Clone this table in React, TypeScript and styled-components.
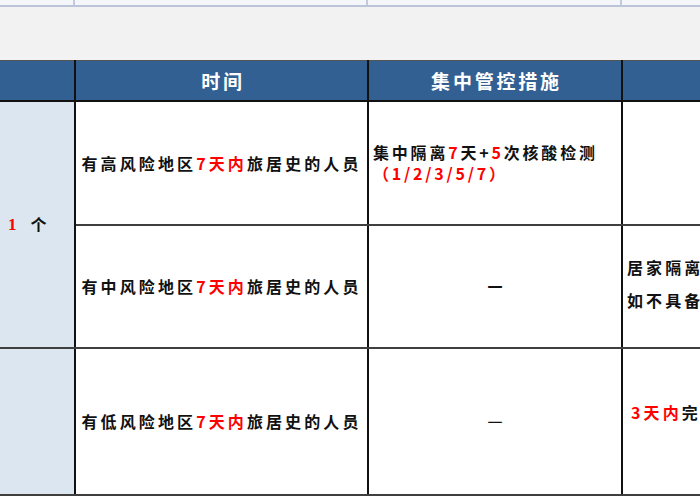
import styled, { createGlobalStyle } from 'styled-components'

const GlobalStyle = createGlobalStyle`
  html, body {
    margin: 0;
    padding: 0;
    background: #ffffff;
    overflow: hidden;
  }
  body {
    font-family: "Noto Sans CJK SC", "Noto Sans", sans-serif;
  }
`

const Sheet = styled.div`
  width: 940px;
`

const TopStrip = styled.div`
  display: grid;
  grid-template-columns: 75px 293px 254px 1fr;
  height: 5px;
  background: #f5f6f9;
  border-bottom: 2px solid #bcc4da;
`

const StripCell = styled.div`
  border-right: 2px solid #c3cadd;
`

const Band = styled.div`
  height: 53px;
  background: #f2f2f2;
`

const Table = styled.table`
  border-collapse: collapse;
  table-layout: fixed;
  width: 920px;
  border-top: 1px solid #555555;
`

const HeadCell = styled.th`
  height: 39px;
  padding: 0 0 0 3px;
  background: #336092;
  color: #ffffff;
  font-size: 19px;
  font-weight: 700;
  letter-spacing: 2.8px;
  text-align: center;
  border-left: 2px solid #111111;
  border-right: 2px solid #111111;
  border-bottom: 2px solid #111111;

  &:first-child {
    border-left: none;
  }
`

const Row = styled.tr<{ $h: number }>`
  height: ${(p) => p.$h}px;
`

const Cell = styled.td<{ $align?: 'left' | 'center'; $side?: boolean }>`
  padding: 0 4px;
  background: ${(p) => (p.$side ? '#dce6f1' : '#ffffff')};
  color: #111111;
  font-size: 16px;
  font-weight: 700;
  letter-spacing: 3.1px;
  line-height: 21px;
  text-align: ${(p) => p.$align ?? 'center'};
  vertical-align: middle;
  border-top: 2px solid #3f3f3f;
  border-bottom: 2px solid #3f3f3f;
  border-left: 2px solid #111111;
  border-right: 2px solid #111111;
  overflow: hidden;

  &:first-child {
    border-left: none;
  }
`

const Red = styled.span`
  color: #ff0000;
`

const Count = styled.div`
  display: flex;
  align-items: center;
  gap: 11px;
  padding-left: 4px;
`

const CountNum = styled.span`
  color: #ff0000;
  font-family: "Liberation Serif", serif;
  font-size: 17px;
  font-weight: 700;
`

const Line = styled.div`
  white-space: nowrap;
  letter-spacing: 2.8px;
`

const Dash = styled.span<{ $thin?: boolean }>`
  display: inline-block;
  font-size: 15px;
  letter-spacing: 0;
  font-weight: ${(p) => (p.$thin ? 400 : 700)};
`

const Notes = styled.div`
  line-height: 33px;
  white-space: nowrap;
  padding-bottom: 5px;
`

const Lower = styled.div`
  white-space: nowrap;
  padding: 0 0 18px 4px;
`

export default function App() {
  return (
    <>
      <GlobalStyle />
      <Sheet>
        <TopStrip>
          <StripCell />
          <StripCell />
          <StripCell />
          <StripCell />
        </TopStrip>
        <Band />
        <Table>
          <colgroup>
            <col style={{ width: 75 }} />
            <col style={{ width: 293 }} />
            <col style={{ width: 254 }} />
            <col style={{ width: 298 }} />
          </colgroup>
          <thead>
            <tr>
              <HeadCell />
              <HeadCell>时间</HeadCell>
              <HeadCell>集中管控措施</HeadCell>
              <HeadCell />
            </tr>
          </thead>
          <tbody>
            <Row $h={124}>
              <Cell $side rowSpan={2} $align="left">
                <Count>
                  <CountNum>1</CountNum>
                  <span>个</span>
                </Count>
              </Cell>
              <Cell>
                有高风险地区<Red>7天内</Red>旅居史的人员
              </Cell>
              <Cell $align="left">
                <Line>
                  集中隔离<Red>7</Red>天+<Red>5</Red>次核酸检测
                </Line>
                <Line>
                  <Red>（1/2/3/5/7）</Red>
                </Line>
              </Cell>
              <Cell />
            </Row>
            <Row $h={123}>
              <Cell>
                有中风险地区<Red>7天内</Red>旅居史的人员
              </Cell>
              <Cell>
                <Dash>一</Dash>
              </Cell>
              <Cell $align="left">
                <Notes>
                  <div>居家隔离7天，期间开展核酸检测</div>
                  <div>如不具备居家隔离条件的，集中隔离</div>
                </Notes>
              </Cell>
            </Row>
            <Row $h={147}>
              <Cell $side />
              <Cell>
                有低风险地区<Red>7天内</Red>旅居史的人员
              </Cell>
              <Cell>
                <Dash $thin>一</Dash>
              </Cell>
              <Cell $align="left">
                <Lower>
                  <Red>3天内</Red>完成2次核酸检测
                </Lower>
              </Cell>
            </Row>
          </tbody>
        </Table>
      </Sheet>
    </>
  )
}
